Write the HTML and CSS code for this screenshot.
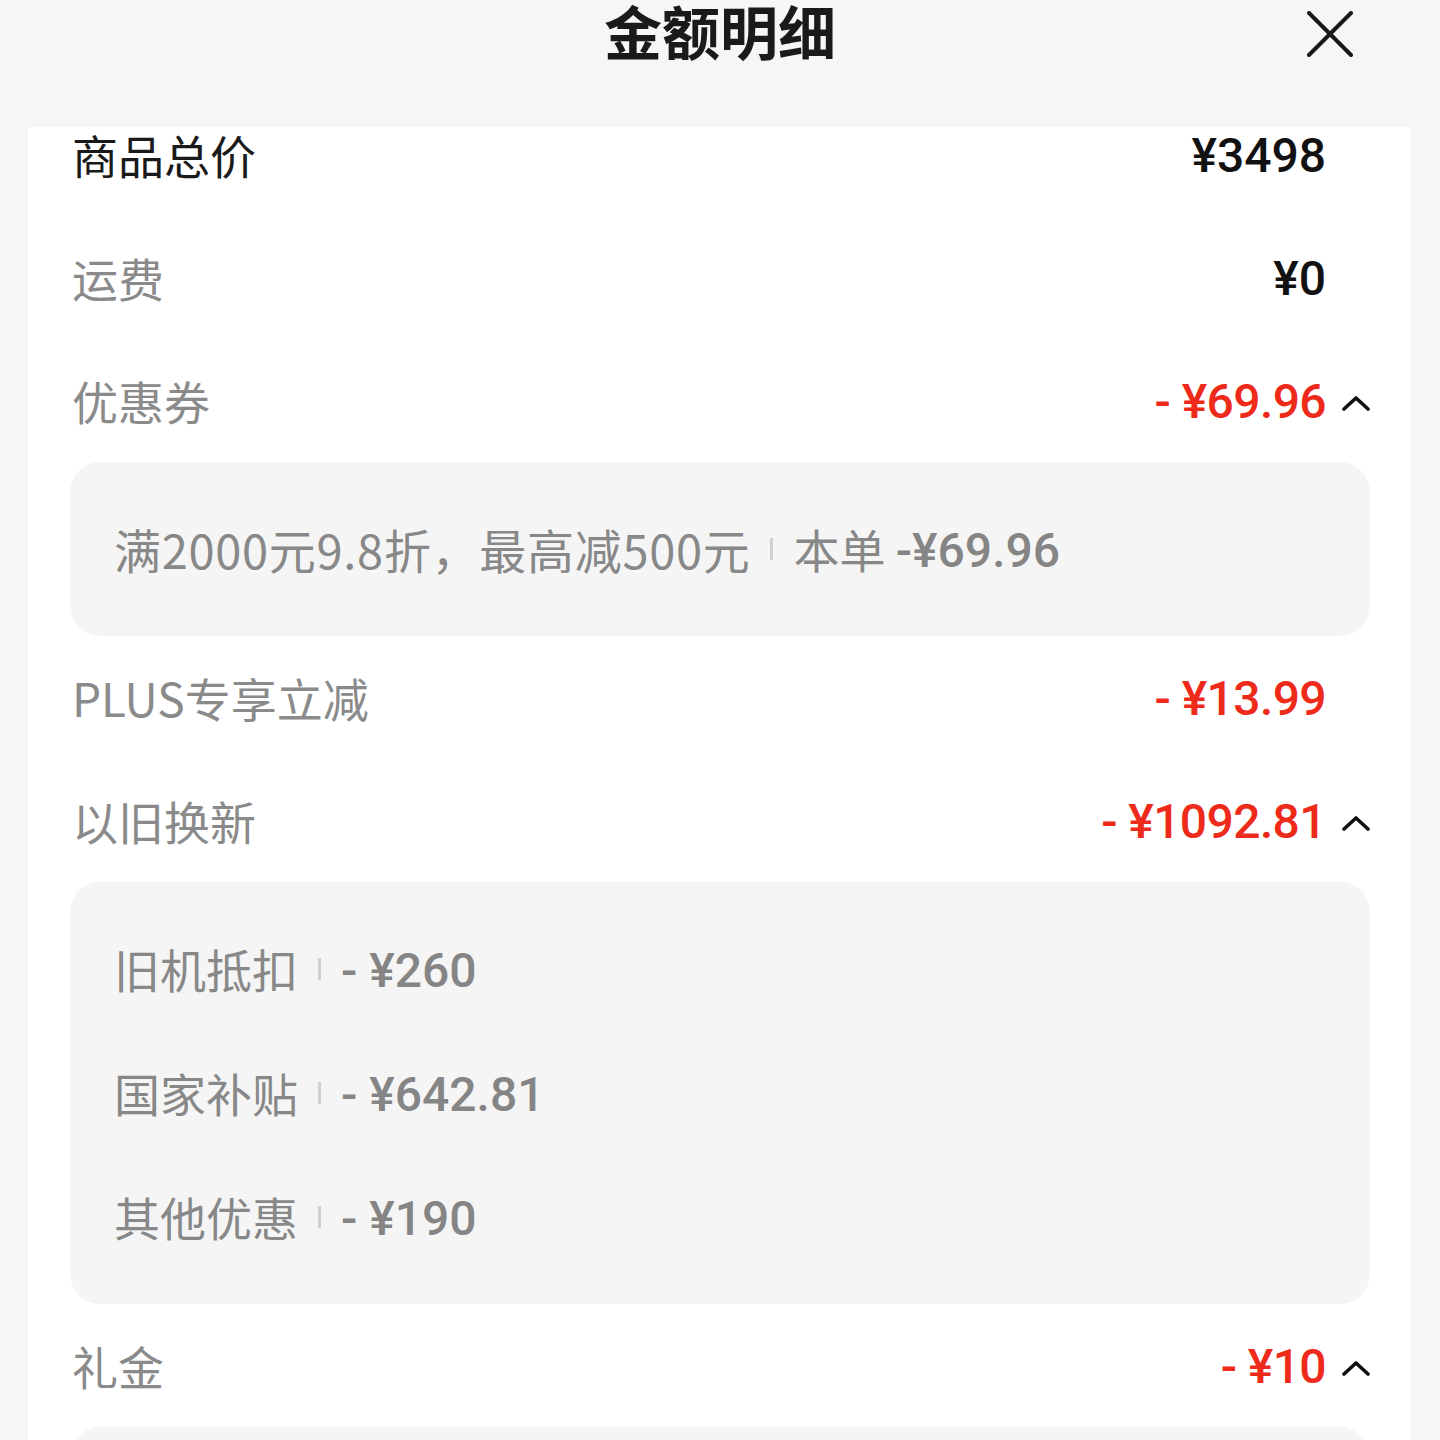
FILE: index.html
```html
<!DOCTYPE html>
<html lang="zh-CN">
<head>
<meta charset="utf-8">
<title>金额明细</title>
<link rel="stylesheet" href="styles.css">
</head>
<body>
<div class="sheet">
  <header class="head">
    <h1 class="title">金额明细</h1>
    <button class="close" aria-label="关闭">
      <svg width="46" height="46" viewBox="0 0 46 46"><path d="M2 2 L44 44 M44 2 L2 44" stroke="#1a1a1a" stroke-width="4" stroke-linecap="round" fill="none"/></svg>
    </button>
  </header>
  <section class="card">
    <div class="list">
      <div class="row">
        <span class="label dark">商品总价</span>
        <span class="val black">¥3498</span>
        <span class="chev off"></span>
      </div>
      <div class="row">
        <span class="label">运费</span>
        <span class="val black">¥0</span>
        <span class="chev off"></span>
      </div>
      <div class="row">
        <span class="label">优惠券</span>
        <span class="val red">- ¥69.96</span>
        <span class="chev"><svg width="28" height="16" viewBox="0 0 28 16"><path d="M2 14 L14 3 L26 14" stroke="#111" stroke-width="3.6" fill="none" stroke-linecap="round" stroke-linejoin="round"/></svg></span>
      </div>
      <div class="box">
        <div class="line"><span class="txt wide">满2000元9.8折，最高减500元</span><i class="sep"></i><span class="txt">本单 </span><b class="num">-¥69.96</b></div>
      </div>
      <div class="row">
        <span class="label">PLUS专享立减</span>
        <span class="val red">- ¥13.99</span>
        <span class="chev off"></span>
      </div>
      <div class="row">
        <span class="label">以旧换新</span>
        <span class="val red">- ¥1092.81</span>
        <span class="chev"><svg width="28" height="16" viewBox="0 0 28 16"><path d="M2 14 L14 3 L26 14" stroke="#111" stroke-width="3.6" fill="none" stroke-linecap="round" stroke-linejoin="round"/></svg></span>
      </div>
      <div class="box">
        <div class="line"><span class="txt">旧机抵扣</span><i class="sep"></i><b class="num">- ¥260</b></div>
        <div class="line"><span class="txt">国家补贴</span><i class="sep"></i><b class="num">- ¥642.81</b></div>
        <div class="line"><span class="txt">其他优惠</span><i class="sep"></i><b class="num">- ¥190</b></div>
      </div>
      <div class="row">
        <span class="label">礼金</span>
        <span class="val red">- ¥10</span>
        <span class="chev"><svg width="28" height="16" viewBox="0 0 28 16"><path d="M2 14 L14 3 L26 14" stroke="#111" stroke-width="3.6" fill="none" stroke-linecap="round" stroke-linejoin="round"/></svg></span>
      </div>
      <div class="box empty"></div>
    </div>
  </section>
</div>
</body>
</html>
```
FILE: styles.css
```css
* { box-sizing: border-box; }
html, body {
  margin: 0;
  padding: 0;
  background: #f6f6f6;
  height: 1440px;
  overflow: hidden;
}
body {
  font-family: "Noto Sans CJK SC", "Noto Sans", sans-serif;
  color: #1a1a1a;
}
.sheet {
  display: flex;
  flex-direction: column;
  height: 1440px;
}
.head {
  height: 127px;
  display: grid;
  grid-template-columns: 1fr auto 1fr;
  align-items: start;
}
.title {
  grid-column: 2;
  margin: 0;
  padding-top: 0;
  font-size: 58px;
  font-weight: 700;
  line-height: 60px;
  color: #1a1a1a;
}
.close {
  grid-column: 3;
  justify-self: end;
  margin: 11px 87px 0 0;
  padding: 0;
  border: 0;
  background: none;
  width: 46px;
  height: 46px;
  display: flex;
}
.card {
  flex: 1;
  margin: 0 29px 0 28px;
  background: #fff;
  overflow: hidden;
}
.list {
  margin-top: -34px;
  display: flex;
  flex-direction: column;
}
.row {
  height: 123px;
  display: flex;
  align-items: center;
  padding: 0 41px 0 44px;
}
.label {
  flex: 1;
  font-size: 46px;
  line-height: 1.1;
  color: #8a8a8a;
}
.label.dark { color: #1a1a1a; }
.val {
  font-family: Roboto, "Noto Sans CJK SC", sans-serif;
  font-size: 48px;
  line-height: 1.1;
  font-weight: 500;
  padding-top: 3px;
}
.val.black { color: #111; }
.val.red { color: #ee2a1b; letter-spacing: -0.6px; }
.chev {
  width: 44px;
  display: flex;
  justify-content: flex-end;
  align-items: center;
  padding-top: 4px;
}
.chev.off { visibility: hidden; }
.box {
  margin: 0 41px 0 42px;
  background: #f5f5f5;
  border-radius: 30px;
  padding: 25px 44px;
}
.box.empty { height: 124px; }
.line {
  height: 124px;
  display: flex;
  align-items: center;
  color: #888;
  white-space: nowrap;
}
.txt {
  font-size: 46px;
  line-height: 1.2;
  white-space: pre;
}
.txt.wide {
  font-size: 47px;
  letter-spacing: 0.7px;
}
.sep {
  display: inline-block;
  width: 3px;
  height: 22px;
  background: #d0d0d0;
  margin: 0 20px;
}
.num {
  font-family: Roboto, "Noto Sans CJK SC", sans-serif;
  font-weight: 500;
  font-size: 48px;
  line-height: 1.2;
  color: #858585;
  padding-top: 3px;
}
```
